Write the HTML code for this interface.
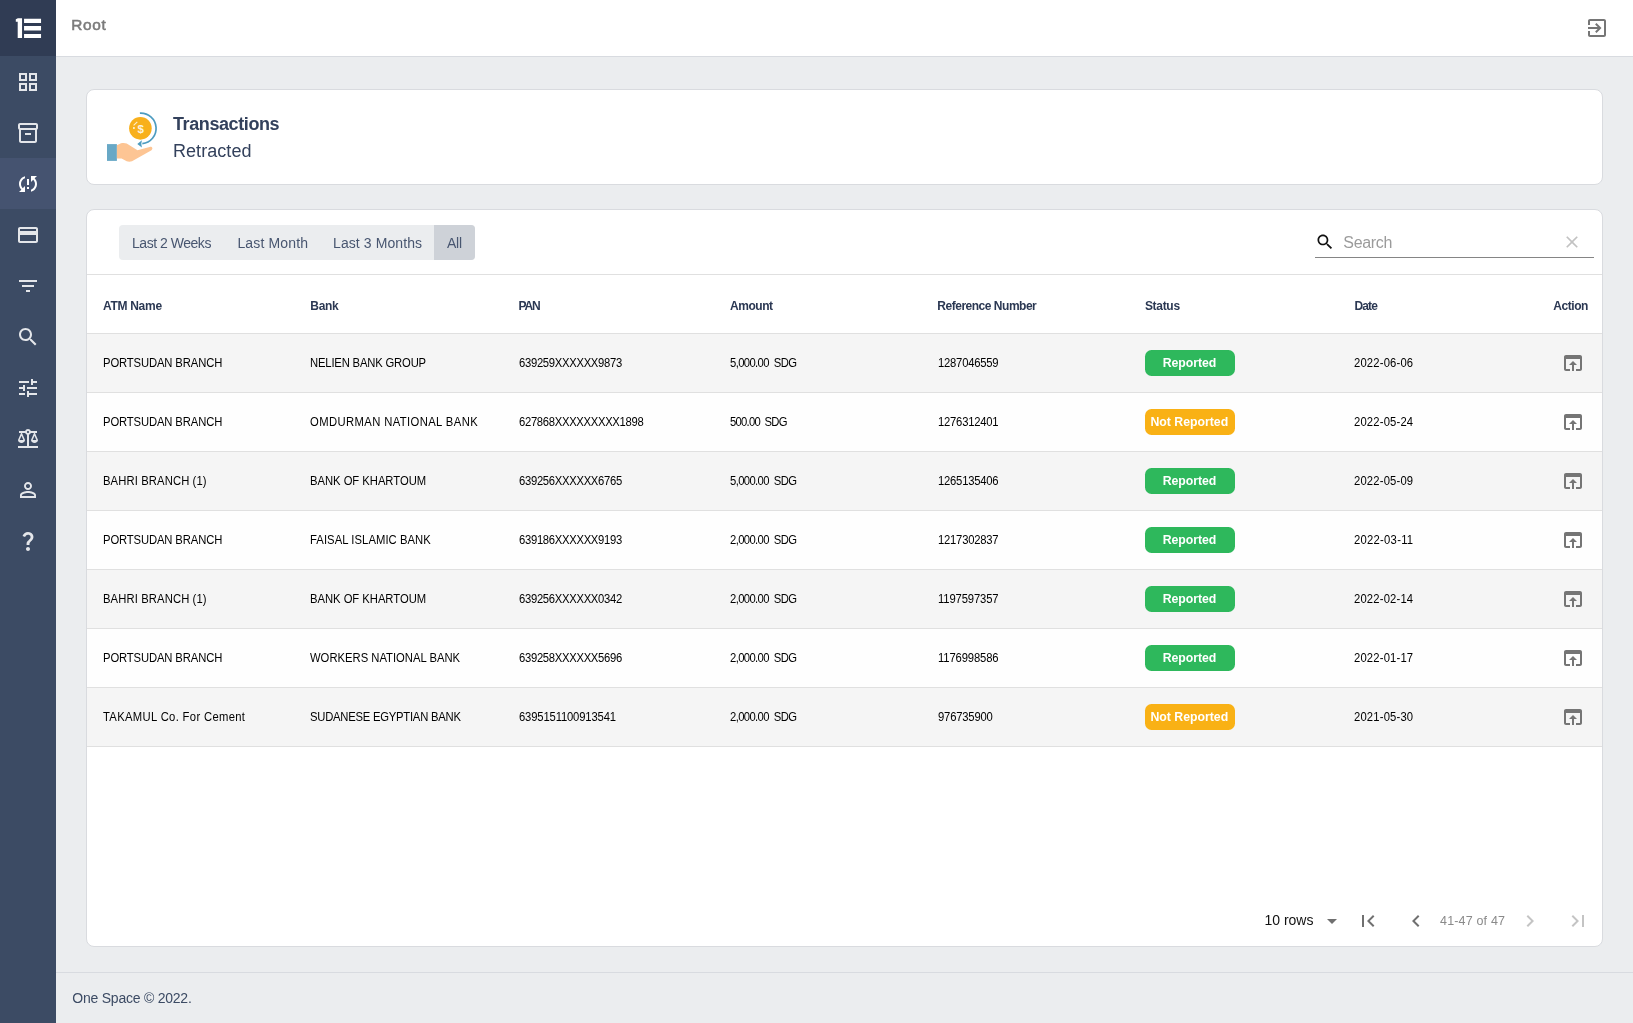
<!DOCTYPE html>
<html lang="en">
<head>
<meta charset="utf-8">
<title>Transactions - Retracted</title>
<style>
*{box-sizing:border-box;margin:0;padding:0}
html,body{width:1633px;height:1023px;overflow:hidden;background:#ebedef;font-family:"Liberation Sans",sans-serif;color:#3c4b64}
.abs{position:absolute}
.t{position:absolute;white-space:nowrap;line-height:1;transform-origin:0 50%}
#sidebar{position:absolute;left:0;top:0;width:56px;height:1023px;background:#3c4b64}
#brand{position:absolute;left:0;top:0;width:56px;height:56px;background:#303c54}
.nav{position:absolute;left:0;width:56px;height:51px}
.nav svg{position:absolute;left:16px;top:14px;width:24px;height:24px;fill:#e4e6ea}
.nav.active{background:#455370}
.nav.active svg{fill:#fff}
#header{position:absolute;left:56px;top:0;width:1577px;height:57px;background:#fff;border-bottom:1px solid #d8dbe0}
#footer{position:absolute;left:56px;top:972px;width:1577px;height:51px;background:#ebedef;border-top:1px solid #d8dbe0}
.card{position:absolute;left:86px;width:1517px;background:#fff;border:1px solid #d9dbdf;border-radius:8px}
#card1{top:89px;height:96px}
#card2{top:209px;height:738px}

.row{position:absolute;left:87px;width:1515px;height:58px;border-bottom:0}
.hline{position:absolute;left:87px;width:1515px;height:1px;background:#e0e0e0}
.badge{position:absolute;left:1145px;width:90px;height:26px;border-radius:6.5px}
.badge.ok{background:#2eb85c}
.badge.warn{background:#f9b115}
.act{fill:#757575}
#pills{position:absolute;left:119px;top:225px;width:356px;height:35px;background:#ebedef;border-radius:4px}
#pillact{position:absolute;left:434px;top:225px;width:41px;height:35px;background:#ced2d8;border-radius:0 4px 4px 0}
</style>
</head>
<body>
<div id="sidebar">
  <div id="brand"></div>
  <svg class="abs" style="left:14px;top:16px;overflow:visible" width="28" height="24" viewBox="-2 0 28 24" fill="#fff"><path d="M-0.200 3.300L1.900 2.200H6.050V22.100H1.700V5.700H-0.200zM8.050 2.800H25.050V6.900H8.050zM8.050 10.100H25.050V14.600H8.050zM8.050 18H25.050V22.100H8.050z"/></svg>
  <div class="nav" style="top:56px"><svg viewBox="0 0 24 24"><path d="M3 3v8h8V3H3zm6 6H5V5h4v4zm-6 4v8h8v-8H3zm6 6H5v-4h4v4zm4-16v8h8V3h-8zm6 6h-4V5h4v4zm-6 4v8h8v-8h-8zm6 6h-4v-4h4v4z"/></svg></div>
  <div class="nav" style="top:107px"><svg viewBox="0 0 24 24"><path d="M20 2H4c-1 0-2 .9-2 2v3.01c0 .72.43 1.34 1 1.69V20c0 1.1 1.1 2 2 2h14c.9 0 2-.9 2-2V8.7c.57-.35 1-.97 1-1.69V4c0-1.1-1-2-2-2zm-1 18H5V9h14v11zm1-13H4V4h16v3zM9 12h6v2H9z"/></svg></div>
  <div class="nav active" style="top:158px"><svg viewBox="0 0 24 24"><path d="M3 12c0 2.21.91 4.2 2.36 5.64L3 20h6v-6l-2.24 2.24C5.68 15.15 5 13.66 5 12c0-2.61 1.67-4.83 4-5.65V4.26C5.55 5.15 3 8.27 3 12zm8 5h2v-2h-2v2zM21 4h-6v6l2.24-2.24C18.32 8.85 19 10.34 19 12c0 2.61-1.67 4.83-4 5.65v2.09c3.45-.89 6-4.01 6-7.74 0-2.21-.91-4.2-2.36-5.64L21 4zm-10 9h2V7h-2v6z"/></svg></div>
  <div class="nav" style="top:209px"><svg viewBox="0 0 24 24"><path d="M20 4H4c-1.11 0-1.99.89-1.99 2L2 18c0 1.11.89 2 2 2h16c1.11 0 2-.89 2-2V6c0-1.11-.89-2-2-2zm0 14H4v-6h16v6zm0-10H4V6h16v2z"/></svg></div>
  <div class="nav" style="top:260px"><svg viewBox="0 0 24 24"><path d="M10 18h4v-2h-4v2zM3 6v2h18V6H3zm3 7h12v-2H6v2z"/></svg></div>
  <div class="nav" style="top:311px"><svg viewBox="0 0 24 24"><path d="M15.5 14h-.79l-.28-.27C15.41 12.59 16 11.11 16 9.5 16 5.91 13.09 3 9.5 3S3 5.91 3 9.5 5.91 16 9.5 16c1.61 0 3.09-.59 4.23-1.57l.27.28v.79l5 4.99L20.49 19l-4.99-5zm-6 0C7.01 14 5 11.99 5 9.5S7.01 5 9.5 5 14 7.01 14 9.5 11.99 14 9.5 14z"/></svg></div>
  <div class="nav" style="top:362px"><svg viewBox="0 0 24 24"><path d="M3 17v2h6v-2H3zM3 5v2h10V5H3zm10 16v-2h8v-2h-8v-2h-2v6h2zM7 9v2H3v2h4v2h2V9H7zm14 4v-2H11v2h10zm-6-4h2V7h4V5h-4V3h-2v6z"/></svg></div>
  <div class="nav" style="top:413px"><svg viewBox="0 0 24 24"><path d="M13 7.83c.85-.3 1.53-.98 1.83-1.83H18l-3 7c0 1.66 1.57 3 3.5 3s3.5-1.34 3.5-3l-3-7h2V4h-6.17C14.42 2.83 13.31 2 12 2s-2.42.83-2.83 2H3v2h2l-3 7c0 1.66 1.57 3 3.5 3S9 14.66 9 13L6 6h3.17c.3.85.98 1.53 1.83 1.83V19H2v2h20v-2h-9V7.83zM20.37 13h-3.74l1.87-4.36L20.37 13zm-13 0H3.63L5.5 8.64 7.37 13zM12 6c-.55 0-1-.45-1-1s.45-1 1-1 1 .45 1 1-.45 1-1 1z"/></svg></div>
  <div class="nav" style="top:464px"><svg viewBox="0 0 24 24"><path d="M12 5.9c1.16 0 2.1.94 2.1 2.1s-.94 2.1-2.1 2.1S9.9 9.16 9.9 8s.94-2.1 2.1-2.1m0 9c2.97 0 6.1 1.46 6.1 2.1v1.1H5.900V17c0-.64 3.13-2.1 6.1-2.1M12 4C9.79 4 8 5.79 8 8s1.79 4 4 4 4-1.79 4-4-1.79-4-4-4zm0 9c-2.67 0-8 1.34-8 4v3h16v-3c0-2.66-5.33-4-8-4z"/></svg></div>
  <div class="nav" style="top:515px"><svg viewBox="0 0 24 24"><path d="M11.07 12.85c.77-1.39 2.25-2.21 3.11-3.44.91-1.29.4-3.7-2.18-3.7-1.69 0-2.52 1.28-2.87 2.34L6.54 6.96C7.25 4.83 9.18 3 11.99 3c2.35 0 3.96 1.07 4.78 2.41.7 1.15 1.11 3.3.03 4.9-1.2 1.77-2.35 2.31-2.97 3.45-.25.46-.35.76-.35 2.24h-2.89c-.01-.78-.13-2.05.48-3.15zM14 20c0 1.1-.9 2-2 2s-2-.9-2-2 .9-2 2-2 2 .9 2 2z"/></svg></div>
</div>
<div id="header"></div>
<div class="card" id="card1"></div>
<div class="card" id="card2"></div>
<div id="footer"></div>
<!-- header logout icon -->
<svg class="abs" style="left:1585px;top:16px" width="24" height="24" viewBox="0 0 24 24" fill="#767676"><path d="M10.09 15.59L11.5 17l5-5-5-5-1.41 1.41L12.67 11H3v2h9.67l-2.58 2.590zM19 3H5c-1.11 0-2 .9-2 2v4h2V5h14v14H5v-4H3v4c0 1.100.89 2 2 2h14c1.100 0 2-.900 2-2V5c0-1.100-.9-2-2-2z"/></svg>
<!-- title icon -->
<svg class="abs" style="left:104px;top:108px" width="58" height="58" viewBox="104 108 58 58">
  <rect x="107" y="144.100" width="9.900" height="16.800" fill="#68a8c6"/>
  <path d="M116.900 145.200 L121 143.200 C123 142.700 125 142.800 126.700 143.400 L137.500 150.300 L149.600 146.900 C152.300 146.300 153.300 148.700 151.500 150.200 L132 161.300 C130.200 161.900 128.300 161.800 126.700 161.300 L121.600 158.400 L116.900 158.400 Z" fill="#fdc594"/>
  <path d="M139.90 113.22 A15.3 15.3 0 0 1 142.30 143.72" fill="none" stroke="#4d9cc0" stroke-width="1.700"/>
  <path d="M137.300 143.900 L141.900 140.300 L141.300 143.700 L141.900 147.500 Z" fill="#4d9cc0"/>
  <circle cx="140.400" cy="128.350" r="11.300" fill="#f8b01c"/>
  <path d="M133.600 125.300 L137.300 121.800" stroke="#fdf0d2" stroke-width="1.100" fill="none"/>
  <rect x="133" y="127.100" width="1.800" height="1.800" fill="#fdf0d2"/>
  <text x="140.600" y="132.500" font-family="Liberation Sans, sans-serif" font-size="11.500" font-weight="700" fill="#fdf3dc" text-anchor="middle">$</text>
</svg>
<div id="pills"></div><div id="pillact"></div>
<!-- search -->
<svg class="abs" style="left:1315px;top:232.200px" width="20" height="20" viewBox="0 0 24 24" fill="#111"><path d="M15.500 14h-.79l-.28-.27C15.410 12.590 16 11.110 16 9.500 16 5.910 13.090 3 9.500 3S3 5.910 3 9.500 5.910 16 9.500 16c1.610 0 3.090-.59 4.230-1.570l.27.28v.79l5 4.990L20.490 19l-4.990-5zm-6 0C7.010 14 5 11.990 5 9.500S7.010 5 9.500 5 14 7.010 14 9.500 11.990 14 9.500 14z"/></svg>
<div class="abs" style="left:1315px;top:257px;width:279px;height:1px;background:#858585"></div>
<svg class="abs" style="left:1562px;top:232.300px" width="20" height="20" viewBox="0 0 24 24" fill="#c2c2c2"><path d="M19 6.410L17.590 5 12 10.590 6.410 5 5 6.410 10.590 12 5 17.590 6.410 19 12 13.410 17.590 19 19 17.590 13.410 12z"/></svg>
<div class="hline" style="top:274px"></div>
<div class="hline" style="top:333px"></div>
<div class="row" style="top:334px;background:#f5f5f5"></div>
<div class="badge ok" style="top:350px"></div>
<svg class="abs act" style="left:1561px;top:351px" width="24" height="24" viewBox="0 0 24 24"><path d="M19 4H5c-1.11 0-2 .9-2 2v12c0 1.1.89 2 2 2h4v-2H5V8h14v10h-4v2h4c1.1 0 2-.9 2-2V6c0-1.1-.89-2-2-2zm-7 6l-4 4h3v6h2v-6h3l-4-4z"/></svg>
<div class="row" style="top:393px;background:#fefefe"></div>
<div class="badge warn" style="top:409px"></div>
<svg class="abs act" style="left:1561px;top:410px" width="24" height="24" viewBox="0 0 24 24"><path d="M19 4H5c-1.11 0-2 .9-2 2v12c0 1.1.89 2 2 2h4v-2H5V8h14v10h-4v2h4c1.1 0 2-.9 2-2V6c0-1.1-.89-2-2-2zm-7 6l-4 4h3v6h2v-6h3l-4-4z"/></svg>
<div class="row" style="top:452px;background:#f5f5f5"></div>
<div class="badge ok" style="top:468px"></div>
<svg class="abs act" style="left:1561px;top:469px" width="24" height="24" viewBox="0 0 24 24"><path d="M19 4H5c-1.11 0-2 .9-2 2v12c0 1.1.89 2 2 2h4v-2H5V8h14v10h-4v2h4c1.1 0 2-.9 2-2V6c0-1.1-.89-2-2-2zm-7 6l-4 4h3v6h2v-6h3l-4-4z"/></svg>
<div class="row" style="top:511px;background:#fefefe"></div>
<div class="badge ok" style="top:527px"></div>
<svg class="abs act" style="left:1561px;top:528px" width="24" height="24" viewBox="0 0 24 24"><path d="M19 4H5c-1.11 0-2 .9-2 2v12c0 1.1.89 2 2 2h4v-2H5V8h14v10h-4v2h4c1.1 0 2-.9 2-2V6c0-1.1-.89-2-2-2zm-7 6l-4 4h3v6h2v-6h3l-4-4z"/></svg>
<div class="row" style="top:570px;background:#f5f5f5"></div>
<div class="badge ok" style="top:586px"></div>
<svg class="abs act" style="left:1561px;top:587px" width="24" height="24" viewBox="0 0 24 24"><path d="M19 4H5c-1.11 0-2 .9-2 2v12c0 1.1.89 2 2 2h4v-2H5V8h14v10h-4v2h4c1.1 0 2-.9 2-2V6c0-1.1-.89-2-2-2zm-7 6l-4 4h3v6h2v-6h3l-4-4z"/></svg>
<div class="row" style="top:629px;background:#fefefe"></div>
<div class="badge ok" style="top:645px"></div>
<svg class="abs act" style="left:1561px;top:646px" width="24" height="24" viewBox="0 0 24 24"><path d="M19 4H5c-1.11 0-2 .9-2 2v12c0 1.1.89 2 2 2h4v-2H5V8h14v10h-4v2h4c1.1 0 2-.9 2-2V6c0-1.1-.89-2-2-2zm-7 6l-4 4h3v6h2v-6h3l-4-4z"/></svg>
<div class="row" style="top:688px;background:#f5f5f5"></div>
<div class="badge warn" style="top:704px"></div>
<svg class="abs act" style="left:1561px;top:705px" width="24" height="24" viewBox="0 0 24 24"><path d="M19 4H5c-1.11 0-2 .9-2 2v12c0 1.1.89 2 2 2h4v-2H5V8h14v10h-4v2h4c1.1 0 2-.9 2-2V6c0-1.1-.89-2-2-2zm-7 6l-4 4h3v6h2v-6h3l-4-4z"/></svg>
<div class="hline" style="top:392px"></div><div class="hline" style="top:451px"></div><div class="hline" style="top:510px"></div><div class="hline" style="top:569px"></div><div class="hline" style="top:628px"></div><div class="hline" style="top:687px"></div><div class="hline" style="top:746px"></div>
<!-- pagination -->
<svg class="abs" style="left:1320px;top:909px" width="24" height="24" viewBox="0 0 24 24" fill="#6f6f6f"><path d="M7 10l5 5 5-5z"/></svg>
<svg class="abs" style="left:1356px;top:909px" width="24" height="24" viewBox="0 0 24 24" fill="#707070"><path d="M18.410 16.590L13.820 12l4.590-4.590L17 6l-6 6 6 6zM6 6h2v12H6z"/></svg>
<svg class="abs" style="left:1404px;top:909px" width="24" height="24" viewBox="0 0 24 24" fill="#707070"><path d="M15.410 7.410L14 6l-6 6 6 6 1.410-1.410L10.830 12z"/></svg>
<svg class="abs" style="left:1518px;top:909px" width="24" height="24" viewBox="0 0 24 24" fill="#c4c4c4"><path d="M10 6L8.590 7.410 13.170 12l-4.580 4.590L10 18l6-6z"/></svg>
<svg class="abs" style="left:1566px;top:909px" width="24" height="24" viewBox="0 0 24 24" fill="#c4c4c4"><path d="M5.590 7.410L10.180 12l-4.590 4.590L7 18l6-6-6-6zM16 6h2v12h-2z"/></svg>
<div id="txt" style="position:absolute;left:0;top:0;width:1633px;height:1023px;will-change:transform">
<span class="t" style="left:71.3px;top:16.8px;font-size:15.4px;letter-spacing:0.695px;color:#7b7b7b;-webkit-text-stroke:0.55px #7b7b7b">Root</span>
<span class="t" style="left:173.0px;top:114.8px;font-size:18px;letter-spacing:-0.404px;color:#33415c;font-weight:700">Transactions</span>
<span class="t" style="left:173.0px;top:141.6px;font-size:18px;letter-spacing:0.057px;color:#33415c">Retracted</span>
<span class="t" style="left:132.0px;top:235.9px;font-size:14px;letter-spacing:-0.469px;color:#485670">Last 2 Weeks</span>
<span class="t" style="left:237.4px;top:235.9px;font-size:14px;letter-spacing:0.148px;color:#485670">Last Month</span>
<span class="t" style="left:333.0px;top:235.9px;font-size:14px;letter-spacing:0.089px;color:#485670">Last 3 Months</span>
<span class="t" style="left:447.0px;top:235.9px;font-size:14px;letter-spacing:-0.281px;color:#485670">All</span>
<span class="t" style="left:1343.3px;top:234.5px;font-size:16px;letter-spacing:-0.321px;color:#9b9b9b">Search</span>
<span class="t" style="left:102.9px;top:299.7px;font-size:12px;letter-spacing:-0.275px;color:#2b3853;font-weight:700">ATM Name</span>
<span class="t" style="left:310.3px;top:299.7px;font-size:12px;letter-spacing:-0.281px;color:#2b3853;font-weight:700">Bank</span>
<span class="t" style="left:518.5px;top:299.7px;font-size:12px;letter-spacing:-1.177px;color:#2b3853;font-weight:700">PAN</span>
<span class="t" style="left:730.1px;top:299.7px;font-size:12px;letter-spacing:-0.466px;color:#2b3853;font-weight:700">Amount</span>
<span class="t" style="left:937.3px;top:299.7px;font-size:12px;letter-spacing:-0.481px;color:#2b3853;font-weight:700">Reference Number</span>
<span class="t" style="left:1144.9px;top:299.7px;font-size:12px;letter-spacing:-0.297px;color:#2b3853;font-weight:700">Status</span>
<span class="t" style="left:1354.4px;top:299.7px;font-size:12px;letter-spacing:-0.805px;color:#2b3853;font-weight:700">Date</span>
<span class="t" style="left:1553.3px;top:299.7px;font-size:12px;letter-spacing:-0.449px;color:#2b3853;font-weight:700">Action</span>
<span class="t" style="left:103.3px;top:357.2px;font-size:12.5px;letter-spacing:-0.131px;color:#000;transform:scaleX(0.9)">PORTSUDAN BRANCH</span>
<span class="t" style="left:310.3px;top:357.2px;font-size:12.5px;letter-spacing:-0.187px;color:#000;transform:scaleX(0.9)">NELIEN BANK GROUP</span>
<span class="t" style="left:518.5px;top:357.2px;font-size:12.5px;letter-spacing:-0.325px;color:#000;transform:scaleX(0.9)">639259XXXXXX9873</span>
<span class="t" style="left:730.4px;top:357.2px;font-size:12.5px;letter-spacing:-0.681px;color:#000;transform:scaleX(0.9);word-spacing:2.6px">5,000.00 SDG</span>
<span class="t" style="left:937.7px;top:357.2px;font-size:12.5px;letter-spacing:-0.244px;color:#000;transform:scaleX(0.9)">1287046559</span>
<span class="t" style="left:1354.4px;top:357.2px;font-size:12.5px;letter-spacing:0.190px;color:#000;transform:scaleX(0.9)">2022-06-06</span>
<span class="t" style="left:1162.7px;top:356.6px;font-size:12.3px;letter-spacing:-0.055px;color:#fff;font-weight:700">Reported</span>
<span class="t" style="left:103.3px;top:416.2px;font-size:12.5px;letter-spacing:-0.131px;color:#000;transform:scaleX(0.9)">PORTSUDAN BRANCH</span>
<span class="t" style="left:310.3px;top:416.2px;font-size:12.5px;letter-spacing:0.439px;color:#000;transform:scaleX(0.9)">OMDURMAN NATIONAL BANK</span>
<span class="t" style="left:518.5px;top:416.2px;font-size:12.5px;letter-spacing:-0.334px;color:#000;transform:scaleX(0.9)">627868XXXXXXXXX1898</span>
<span class="t" style="left:730.4px;top:416.2px;font-size:12.5px;letter-spacing:-0.835px;color:#000;transform:scaleX(0.9);word-spacing:2.6px">500.00 SDG</span>
<span class="t" style="left:937.7px;top:416.2px;font-size:12.5px;letter-spacing:-0.244px;color:#000;transform:scaleX(0.9)">1276312401</span>
<span class="t" style="left:1354.4px;top:416.2px;font-size:12.5px;letter-spacing:0.190px;color:#000;transform:scaleX(0.9)">2022-05-24</span>
<span class="t" style="left:1150.4px;top:415.6px;font-size:12.3px;letter-spacing:-0.008px;color:#fff;font-weight:700">Not Reported</span>
<span class="t" style="left:103.3px;top:475.2px;font-size:12.5px;letter-spacing:0.126px;color:#000;transform:scaleX(0.9)">BAHRI BRANCH (1)</span>
<span class="t" style="left:310.3px;top:475.2px;font-size:12.5px;letter-spacing:-0.028px;color:#000;transform:scaleX(0.9)">BANK OF KHARTOUM</span>
<span class="t" style="left:518.5px;top:475.2px;font-size:12.5px;letter-spacing:-0.325px;color:#000;transform:scaleX(0.9)">639256XXXXXX6765</span>
<span class="t" style="left:730.4px;top:475.2px;font-size:12.5px;letter-spacing:-0.681px;color:#000;transform:scaleX(0.9);word-spacing:2.6px">5,000.00 SDG</span>
<span class="t" style="left:937.7px;top:475.2px;font-size:12.5px;letter-spacing:-0.244px;color:#000;transform:scaleX(0.9)">1265135406</span>
<span class="t" style="left:1354.4px;top:475.2px;font-size:12.5px;letter-spacing:0.190px;color:#000;transform:scaleX(0.9)">2022-05-09</span>
<span class="t" style="left:1162.7px;top:474.6px;font-size:12.3px;letter-spacing:-0.055px;color:#fff;font-weight:700">Reported</span>
<span class="t" style="left:103.3px;top:534.2px;font-size:12.5px;letter-spacing:-0.131px;color:#000;transform:scaleX(0.9)">PORTSUDAN BRANCH</span>
<span class="t" style="left:310.3px;top:534.2px;font-size:12.5px;letter-spacing:0.072px;color:#000;transform:scaleX(0.9)">FAISAL ISLAMIC BANK</span>
<span class="t" style="left:518.5px;top:534.2px;font-size:12.5px;letter-spacing:-0.325px;color:#000;transform:scaleX(0.9)">639186XXXXXX9193</span>
<span class="t" style="left:730.4px;top:534.2px;font-size:12.5px;letter-spacing:-0.681px;color:#000;transform:scaleX(0.9);word-spacing:2.6px">2,000.00 SDG</span>
<span class="t" style="left:937.7px;top:534.2px;font-size:12.5px;letter-spacing:-0.244px;color:#000;transform:scaleX(0.9)">1217302837</span>
<span class="t" style="left:1354.4px;top:534.2px;font-size:12.5px;letter-spacing:0.295px;color:#000;transform:scaleX(0.9)">2022-03-11</span>
<span class="t" style="left:1162.7px;top:533.6px;font-size:12.3px;letter-spacing:-0.055px;color:#fff;font-weight:700">Reported</span>
<span class="t" style="left:103.3px;top:593.2px;font-size:12.5px;letter-spacing:0.126px;color:#000;transform:scaleX(0.9)">BAHRI BRANCH (1)</span>
<span class="t" style="left:310.3px;top:593.2px;font-size:12.5px;letter-spacing:-0.028px;color:#000;transform:scaleX(0.9)">BANK OF KHARTOUM</span>
<span class="t" style="left:518.5px;top:593.2px;font-size:12.5px;letter-spacing:-0.325px;color:#000;transform:scaleX(0.9)">639256XXXXXX0342</span>
<span class="t" style="left:730.4px;top:593.2px;font-size:12.5px;letter-spacing:-0.681px;color:#000;transform:scaleX(0.9);word-spacing:2.6px">2,000.00 SDG</span>
<span class="t" style="left:937.7px;top:593.2px;font-size:12.5px;letter-spacing:-0.140px;color:#000;transform:scaleX(0.9)">1197597357</span>
<span class="t" style="left:1354.4px;top:593.2px;font-size:12.5px;letter-spacing:0.190px;color:#000;transform:scaleX(0.9)">2022-02-14</span>
<span class="t" style="left:1162.7px;top:592.6px;font-size:12.3px;letter-spacing:-0.055px;color:#fff;font-weight:700">Reported</span>
<span class="t" style="left:103.3px;top:652.2px;font-size:12.5px;letter-spacing:-0.131px;color:#000;transform:scaleX(0.9)">PORTSUDAN BRANCH</span>
<span class="t" style="left:310.3px;top:652.2px;font-size:12.5px;letter-spacing:0.004px;color:#000;transform:scaleX(0.9)">WORKERS NATIONAL BANK</span>
<span class="t" style="left:518.5px;top:652.2px;font-size:12.5px;letter-spacing:-0.325px;color:#000;transform:scaleX(0.9)">639258XXXXXX5696</span>
<span class="t" style="left:730.4px;top:652.2px;font-size:12.5px;letter-spacing:-0.681px;color:#000;transform:scaleX(0.9);word-spacing:2.6px">2,000.00 SDG</span>
<span class="t" style="left:937.7px;top:652.2px;font-size:12.5px;letter-spacing:-0.140px;color:#000;transform:scaleX(0.9)">1176998586</span>
<span class="t" style="left:1354.4px;top:652.2px;font-size:12.5px;letter-spacing:0.190px;color:#000;transform:scaleX(0.9)">2022-01-17</span>
<span class="t" style="left:1162.7px;top:651.6px;font-size:12.3px;letter-spacing:-0.055px;color:#fff;font-weight:700">Reported</span>
<span class="t" style="left:103.3px;top:711.2px;font-size:12.5px;letter-spacing:0.368px;color:#000;transform:scaleX(0.9)">TAKAMUL Co. For Cement</span>
<span class="t" style="left:310.3px;top:711.2px;font-size:12.5px;letter-spacing:-0.252px;color:#000;transform:scaleX(0.9)">SUDANESE EGYPTIAN BANK</span>
<span class="t" style="left:518.5px;top:711.2px;font-size:12.5px;letter-spacing:-0.169px;color:#000;transform:scaleX(0.9)">6395151100913541</span>
<span class="t" style="left:730.4px;top:711.2px;font-size:12.5px;letter-spacing:-0.681px;color:#000;transform:scaleX(0.9);word-spacing:2.6px">2,000.00 SDG</span>
<span class="t" style="left:937.7px;top:711.2px;font-size:12.5px;letter-spacing:-0.211px;color:#000;transform:scaleX(0.9)">976735900</span>
<span class="t" style="left:1354.4px;top:711.2px;font-size:12.5px;letter-spacing:0.190px;color:#000;transform:scaleX(0.9)">2021-05-30</span>
<span class="t" style="left:1150.4px;top:710.6px;font-size:12.3px;letter-spacing:-0.008px;color:#fff;font-weight:700">Not Reported</span>
<span class="t" style="left:1264.4px;top:913.1px;font-size:14px;letter-spacing:0.011px;color:#111">10 rows</span>
<span class="t" style="left:1440.0px;top:915.1px;font-size:12.5px;letter-spacing:0.175px;color:#8a8a8a">41-47 of 47</span>
<span class="t" style="left:72.3px;top:991.0px;font-size:14px;letter-spacing:-0.230px;color:#3c4b64">One Space © 2022.</span>
</div>

</body>
</html>
